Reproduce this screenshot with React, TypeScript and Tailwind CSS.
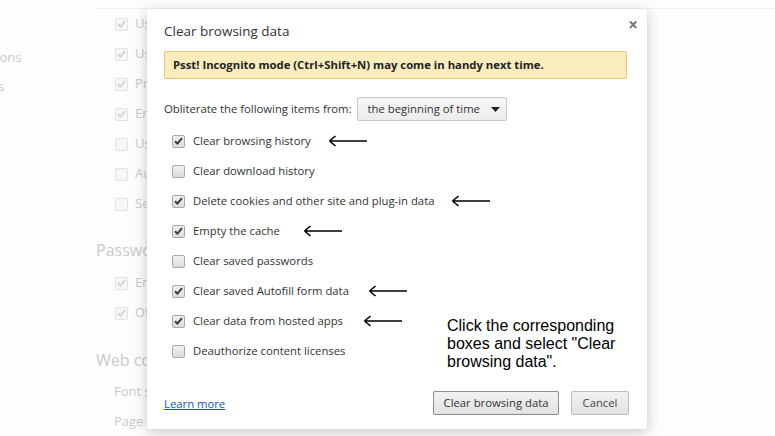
import React from 'react'

const font = { fontFamily: '"Open Sans", "Noto Sans", sans-serif' }

const rows = [
  { label: 'Clear browsing history', checked: true, arrow: 'left-[164px]' },
  { label: 'Clear download history', checked: false },
  { label: 'Delete cookies and other site and plug-in data', checked: true, arrow: 'left-[287px]' },
  { label: 'Empty the cache', checked: true, arrow: 'left-[139px]' },
  { label: 'Clear saved passwords', checked: false },
  { label: 'Clear saved Autofill form data', checked: true, arrow: 'left-[204px]' },
  { label: 'Clear data from hosted apps', checked: true, arrow: 'left-[199px]' },
  { label: 'Deauthorize content licenses', checked: false },
]

const bgRows = [
  { label: 'Use a web service', checked: true },
  { label: 'Use a prediction service', checked: true },
  { label: 'Predict network actions', checked: true },
  { label: 'Enable phishing protection', checked: true },
  { label: 'Use a web service to help', checked: false },
  { label: 'Automatically send usage', checked: false },
  { label: 'Send a "Do Not Track"', checked: false },
]

function Check({ checked, faded }: { checked: boolean; faded?: boolean }) {
  return (
    <span
      className={
        faded
          ? 'flex h-[13px] w-[13px] shrink-0 items-center justify-center rounded-[2px] border border-[#e2e2e2] bg-[#f7f7f7]'
          : 'flex h-[13px] w-[13px] shrink-0 items-center justify-center rounded-[2px] border border-[#a9a9a9] bg-gradient-to-b from-[#f1f1f1] to-[#dcdcdc]'
      }
    >
      {checked && (
        <svg width="9" height="8" viewBox="0 0 9 8">
          <path
            d="M1 4.2 L3.4 6.6 L8 1.2"
            fill="none"
            stroke={faded ? '#d4d4d4' : '#3c3c3c'}
            strokeWidth="2"
          />
        </svg>
      )}
    </span>
  )
}

function Arrow() {
  return (
    <svg width="40" height="12" viewBox="0 0 40 12">
      <path d="M1.5 6 H39 M1.5 6 L7.5 1 M1.5 6 L7.5 11" fill="none" stroke="#000" strokeWidth="1.6" />
    </svg>
  )
}

export default function App() {
  return (
    <div className="relative h-[436px] w-[775px] overflow-hidden bg-[#fdfdfd]" style={font}>
      {/* faded settings page behind */}
      <div className="flex h-full text-[#cacaca]">
        <div className="-ml-[44px] flex w-[140px] shrink-0 flex-col pt-[14px] text-[13px] leading-[29px]">
          <span>History</span>
          <span>Extensions</span>
          <span>Settings</span>
        </div>
        <div className="mt-[8px] flex-1 border-t border-[#f0f0f0]">
          <div className="flex w-[51px] flex-col overflow-hidden whitespace-nowrap">
            <div className="flex flex-col pl-[19px]">
              {bgRows.map((r) => (
                <div key={r.label} className="flex h-[30px] items-center gap-[7px] text-[13px]">
                  <Check checked={r.checked} faded />
                  <span>{r.label}</span>
                </div>
              ))}
            </div>
            <div className="mt-[21px] text-[16px] leading-[20px]">Passwords and forms</div>
            <div className="mt-[8px] flex flex-col pl-[19px]">
              <div className="flex h-[30px] items-center gap-[7px] text-[13px]">
                <Check checked faded />
                <span>Enable Autofill</span>
              </div>
              <div className="flex h-[30px] items-center gap-[7px] text-[13px]">
                <Check checked faded />
                <span>Offer to save passwords</span>
              </div>
            </div>
            <div className="mt-[22px] text-[16px] leading-[20px]">Web content</div>
            <div className="mt-[6px] flex flex-col pl-[18px] text-[13px] leading-[30px]">
              <span>Font size:</span>
              <span>Page zoom:</span>
            </div>
          </div>
        </div>
      </div>

      {/* dialog */}
      <div className="absolute left-[147px] top-[9px] flex h-[420px] w-[500px] flex-col rounded-[3px] bg-white pl-[17px] pr-[20px] pt-[12px] shadow-[0_3px_14px_rgba(0,0,0,0.22)]">
        <button className="absolute right-[9px] top-[7px] text-[17px] font-bold leading-none text-[#777]">×</button>
        <div className="text-[13.5px] leading-[20px] text-[#333]">Clear browsing data</div>

        <div className="mt-[10px] flex h-[28px] items-center rounded-[2px] border border-[#f0c36d] bg-[#f9edbe] pl-[8px] text-[11.3px] font-bold text-[#222]">
          Psst! Incognito mode (Ctrl+Shift+N) may come in handy next time.
        </div>

        <div className="mt-[18px] flex h-[24px] items-center text-[11.3px] text-[#333]">
          <span>Obliterate the following items from:</span>
          <div className="ml-[5px] flex h-[24px] w-[150px] items-center justify-between rounded-[2px] border border-[#c8c8c8] bg-gradient-to-b from-[#f6f6f6] to-[#ececec] pl-[10px] pr-[6px] text-[#333]">
            <span>the beginning of time</span>
            <svg width="9" height="5" viewBox="0 0 9 5">
              <path d="M0 0 H9 L4.5 5 Z" fill="#222" />
            </svg>
          </div>
        </div>

        <div className="mt-[5px] flex flex-col">
          {rows.map((r) => (
            <div key={r.label} className="relative flex h-[30px] items-center pl-[8px] text-[11.3px] text-[#333]">
              <Check checked={r.checked} />
              <span className="ml-[8px]">{r.label}</span>
              {r.arrow && (
                <span className={`absolute top-[9px] ${r.arrow}`}>
                  <Arrow />
                </span>
              )}
            </div>
          ))}
        </div>

        <div
          className="absolute left-[300px] top-[308px] text-[16px] leading-[18px] text-black"
          style={{ fontFamily: '"Liberation Sans", Arial, sans-serif' }}
        >
          Click the corresponding
          <br />
          boxes and select "Clear
          <br />
          browsing data".
        </div>

        <div className="-mr-[2px] mt-[25px] flex h-[24px] items-center">
          <a className="mt-[2px] text-[11.3px] text-[#1155cc] underline">Learn more</a>
          <div className="ml-auto flex gap-[12px]">
            <button className="h-[24px] w-[126px] rounded-[2px] border border-[#8c8c8c] bg-gradient-to-b from-[#f2f2f2] to-[#e2e2e2] text-[11.3px] text-[#333]">
              Clear browsing data
            </button>
            <button className="h-[24px] w-[58px] rounded-[2px] border border-[#bcbcbc] bg-gradient-to-b from-[#f2f2f2] to-[#e2e2e2] text-[11.3px] text-[#444]">
              Cancel
            </button>
          </div>
        </div>
      </div>
    </div>
  )
}
